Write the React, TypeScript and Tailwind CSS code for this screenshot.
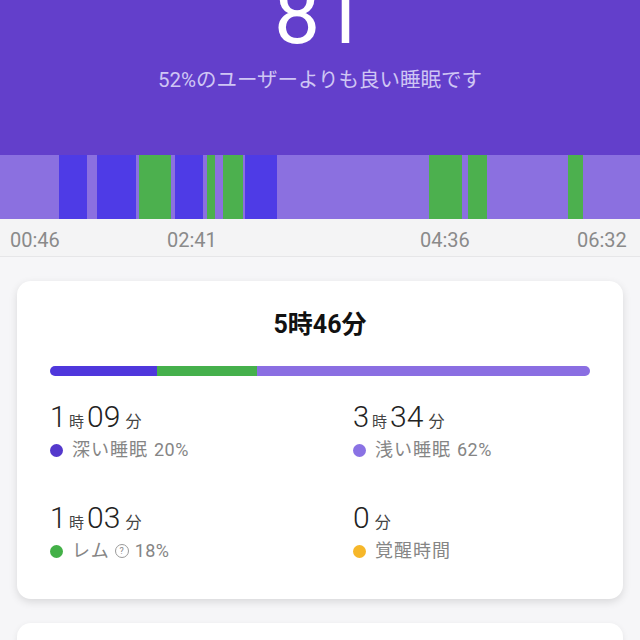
import React from "react";

const segs: [string, number][] = [
  ["l", 59], ["d", 28], ["l", 10], ["d", 39], ["l", 3], ["g", 32], ["l", 4], ["d", 28],
  ["l", 4], ["g", 8], ["l", 8], ["g", 20], ["l", 2], ["d", 32], ["l", 152], ["g", 33],
  ["l", 6], ["g", 19], ["l", 81], ["g", 15], ["l", 57],
];

const segColor: Record<string, string> = {
  l: "bg-[#8b70e0]",
  d: "bg-[#4e3be6]",
  g: "bg-[#4cb04e]",
};

function Stat({ h, m, dot, label, pct }: { h?: string; m: string; dot: string; label: React.ReactNode; pct?: string }) {
  return (
    <div className="flex flex-col">
      <div className="flex items-baseline h-[34px] text-[#222]">
        {h !== undefined && (
          <>
            <span className="text-[29px] leading-[34px] font-light">{h}</span>
            <span className="text-[15px] mx-[3px] text-[#444]">時</span>
          </>
        )}
        <span className="text-[30px] leading-[34px] font-light">{m}</span>
        <span className="text-[16px] ml-[5px] text-[#444]">分</span>
      </div>
      <div className="flex items-center h-[24px] mt-[4px]">
        <span className={`w-[13px] h-[13px] rounded-full ${dot}`} />
        <span className="ml-[9px] text-[18px] tracking-[1px] text-[#858585] leading-[24px] flex items-center">
          {label}
          {pct && <span className="ml-[6px] tracking-[0.5px]">{pct}</span>}
        </span>
      </div>
    </div>
  );
}

export default function App() {
  return (
    <div
      className="w-[640px] h-[640px] overflow-hidden bg-[#f6f6f8]"
      style={{ fontFamily: "Roboto, 'Noto Sans CJK JP', sans-serif" }}
    >
      <div className="h-[155px] bg-[#633fcb] flex flex-col items-center">
        <div className="text-white text-[82px] font-normal leading-none mt-[-26px]">81</div>
        <div className="text-[#cfc6f4] text-[20.5px] leading-[24px] mt-[12px]">52%のユーザーよりも良い睡眠です</div>
      </div>
      <div className="h-[64px] flex">
        {segs.map(([c, w], i) => (
          <div key={i} className={`h-full ${segColor[c]}`} style={{ width: w }} />
        ))}
      </div>
      <div className="h-[38px] flex items-center bg-[#f4f4f5] border-b border-[#e6e6e8] text-[#8a8a8a] text-[20px] pt-[4px]">
        <div className="w-[10px]" />
        <div className="w-[157px]">00:46</div>
        <div className="w-[253px]">02:41</div>
        <div className="w-[157px]">04:36</div>
        <div>06:32</div>
      </div>
      <div className="mx-[17px] mt-[24px] bg-white rounded-[14px] shadow-[0_3px_8px_rgba(0,0,0,0.12)] px-[33px] pt-[28px] pb-[36px]">
        <div className="text-center text-[25px] font-bold leading-[32px] text-[#111]">5時46分</div>
        <div className="mt-[25px] h-[10px] rounded-full overflow-hidden flex">
          <div className="w-[107px] bg-[#4f37dc]" />
          <div className="w-[100px] bg-[#45b04c]" />
          <div className="flex-1 bg-[#8a6ee2]" />
        </div>
        <div className="grid grid-cols-[303px_1fr] mt-[24px] gap-y-[39px]">
          <Stat h="1" m="09" dot="bg-[#5438cc]" label="深い睡眠" pct="20%" />
          <Stat h="3" m="34" dot="bg-[#8a72e4]" label="浅い睡眠" pct="62%" />
          <Stat
            h="1"
            m="03"
            dot="bg-[#43b047]"
            label={
              <>
                レム
                <span className="ml-[5px] inline-flex items-center justify-center w-[14px] h-[14px] rounded-full border border-[#9a9a9a] text-[9px] leading-none tracking-normal">?</span>
              </>
            }
            pct="18%"
          />
          <Stat m="0" dot="bg-[#f6b72a]" label="覚醒時間" />
        </div>
      </div>
      <div className="mx-[17px] mt-[24px] h-[40px] bg-white rounded-[14px] shadow-[0_2px_6px_rgba(0,0,0,0.08)]" />
    </div>
  );
}
